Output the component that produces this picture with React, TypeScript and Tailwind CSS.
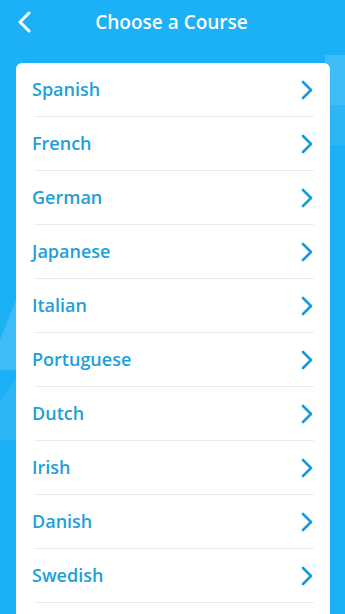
import React from "react";

const courses = [
  "Spanish",
  "French",
  "German",
  "Japanese",
  "Italian",
  "Portuguese",
  "Dutch",
  "Irish",
  "Danish",
  "Swedish",
];

function Chevron() {
  return (
    <svg width="14" height="20" viewBox="0 0 14 20" fill="none">
      <polyline
        points="3,2 11,10 3,18"
        stroke="#1c99d7"
        strokeWidth="2.6"
        strokeLinecap="round"
        strokeLinejoin="round"
      />
    </svg>
  );
}

export default function App() {
  return (
    <div
      className="relative flex flex-col w-[345px] h-[614px] overflow-hidden bg-[#1cb0f6]"
      style={{ fontFamily: '"Open Sans", "Noto Sans", sans-serif' }}
    >
      {/* decorative background shapes */}
      <div className="absolute right-0 top-[55px] w-[20px] h-[50px] bg-[#3dbcf7]" />
      <div className="absolute right-0 top-[105px] w-[20px] h-[40px] bg-[#2cb6f7]" />
      <svg className="absolute left-0 top-[300px]" width="20" height="140" viewBox="0 0 20 140">
        <polygon points="0,40 16,0 16,70 0,70" fill="#3dbcf7" />
        <polygon points="0,100 16,80 16,140 0,140" fill="#2cb6f7" />
      </svg>

      <div className="relative grid grid-cols-[48px_1fr_48px] items-center h-[44px] pl-[16px]">
        <svg width="17" height="22" viewBox="0 0 17 22" fill="none">
          <polyline points="13,2 4,11 13,20" stroke="white" strokeWidth="3" strokeLinecap="round" strokeLinejoin="round" />
        </svg>
        <div className="text-center -ml-[18px] text-white text-[19px] font-semibold">
          Choose a Course
        </div>
        <div />
      </div>

      <div className="relative flex flex-col flex-1 mt-[19px] mx-[16px] w-[314px] bg-white rounded-t-[6px]">
        {courses.map((c) => (
          <div key={c} className="flex flex-col h-[54px] pl-[16px] pr-[16px]">
            <div className="flex flex-1 items-center">
              <span className="flex-1 text-[18px] font-semibold text-[#1e9fda]">{c}</span>
              <Chevron />
            </div>
            <div className="ml-[2px] h-px bg-[#ececec]" />
          </div>
        ))}
      </div>
    </div>
  );
}
